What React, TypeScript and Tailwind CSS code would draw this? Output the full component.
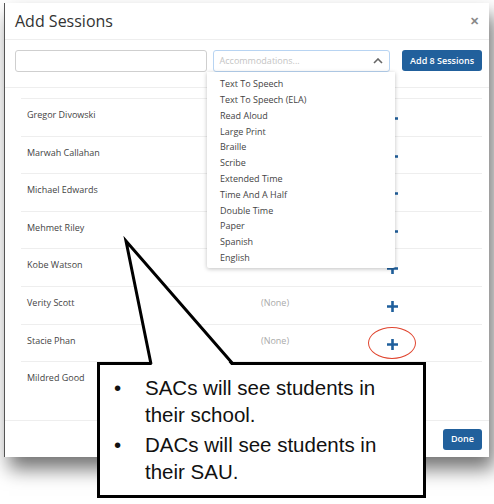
import React from 'react';

const students = [
  'Gregor Divowski',
  'Marwah Callahan',
  'Michael Edwards',
  'Mehmet Riley',
  'Kobe Watson',
  'Verity Scott',
  'Stacie Phan',
  'Mildred Good',
];

const options = [
  'Text To Speech',
  'Text To Speech (ELA)',
  'Read Aloud',
  'Large Print',
  'Braille',
  'Scribe',
  'Extended Time',
  'Time And A Half',
  'Double Time',
  'Paper',
  'Spanish',
  'English',
];

const Plus = () => (
  <svg width="13" height="13" viewBox="0 0 13 13">
    <path d="M6.5 1v11M1 6.5h11" stroke="#1f5f9c" strokeWidth="2.6" />
  </svg>
);

export default function App() {
  return (
    <div className="relative w-[494px] h-[504px] bg-white overflow-hidden" style={{ fontFamily: '"Open Sans", sans-serif' }}>
      {/* modal */}
      <div className="ml-[4px] mt-[3px] w-[485px] h-[454px] bg-white border-l border-[#555] shadow-[5px_12px_18px_rgba(0,0,0,0.55)] flex flex-col">
        <div className="h-[37px] flex items-center justify-between pl-[10px] pr-[10px] border-b border-[#eeeeee]">
          <span className="text-[16px] text-[#333]">Add Sessions</span>
          <span className="text-[11px] font-bold text-[#888]">✕</span>
        </div>
        <div className="h-[48px] flex items-start gap-[6px] pl-[10px] pr-[7px] pt-[10px] border-b border-[#eeeeee]">
          <div className="w-[192px] h-[22px] border border-[#cfcfcf] rounded-[3px]" />
          <div className="w-[178px] h-[22px] border border-[#b8d4f2] rounded-[3px] flex items-center justify-between pl-[6px] pr-[6px]">
            <span className="text-[9px] text-[#c4c4c4]">Accommodations...</span>
            <svg width="10" height="6" viewBox="0 0 10 6">
              <path d="M1 5l4-4 4 4" stroke="#666" strokeWidth="1.6" fill="none" />
            </svg>
          </div>
          <div className="ml-[6px] w-[80px] h-[21px] rounded-[3px] bg-[#21609c] text-white text-[9px] font-semibold flex items-center justify-center">
            Add 8 Sessions
          </div>
        </div>
        <div className="flex-1 pl-[16px] pr-[7px] pt-[10px]">
          <div className="border-t border-[#eeeeee]">
            {students.map((s, i) => (
              <div key={s} className={`h-[37.6px] flex items-start ${i < students.length - 1 ? 'border-b border-[#eeeeee]' : ''}`}>
                <span className="w-[240px] pl-[6px] pt-[9px] text-[9px] text-[#444]">{s}</span>
                <span className="w-[125px] pt-[9px] text-[9px] text-[#aaa]">{i === 5 || i === 6 ? '(None)' : ''}</span>
                {i < 7 && (
                  <span className="pt-[13px]">
                    <Plus />
                  </span>
                )}
              </div>
            ))}
          </div>
        </div>
        <div className="h-[37px] border-t border-[#eeeeee] flex items-center justify-end pr-[7px]">
          <div className="w-[39px] h-[21px] rounded-[3px] bg-[#21609c] text-white text-[9px] font-semibold flex items-center justify-center">
            Done
          </div>
        </div>
      </div>

      {/* dropdown */}
      <div className="absolute left-[207px] top-[72px] w-[188px] h-[196px] bg-white shadow-[0_1px_4px_rgba(0,0,0,0.25)] rounded-b-[2px] pt-[4px] pl-[13px]">
        {options.map((o) => (
          <div key={o} className="h-[15.8px] flex items-center text-[9px] text-[#444]">
            {o}
          </div>
        ))}
      </div>

      {/* red circle */}
      <div className="absolute left-[368px] top-[327px] w-[48px] h-[32px] rounded-[50%] border-[1.5px] border-[#e0452f]" />

      {/* callout */}
      <div
        className="absolute left-[97px] top-[362px] w-[329px] h-[136px] bg-white border-[3px] border-black pl-[14px] pt-[9px]"
        style={{ fontFamily: '"Liberation Sans", Arial, sans-serif' }}
      >
        {[
          ['SACs will see students in', 'their school.'],
          ['DACs will see students in', 'their SAU.'],
        ].map((lines) => (
          <div key={lines[0]} className="flex text-[20.5px] leading-[27px] text-[#111] mb-[3px]">
            <span className="w-[31px]">•</span>
            <span>
              {lines[0]}
              <br />
              {lines[1]}
            </span>
          </div>
        ))}
      </div>
      <svg className="absolute left-0 top-0" width="494" height="504">
        <polygon points="126,241 152,366 232,366" fill="white" />
        <polyline points="151,364 126,241 233,364" fill="none" stroke="black" strokeWidth="3" strokeLinejoin="miter" />
      </svg>
    </div>
  );
}
